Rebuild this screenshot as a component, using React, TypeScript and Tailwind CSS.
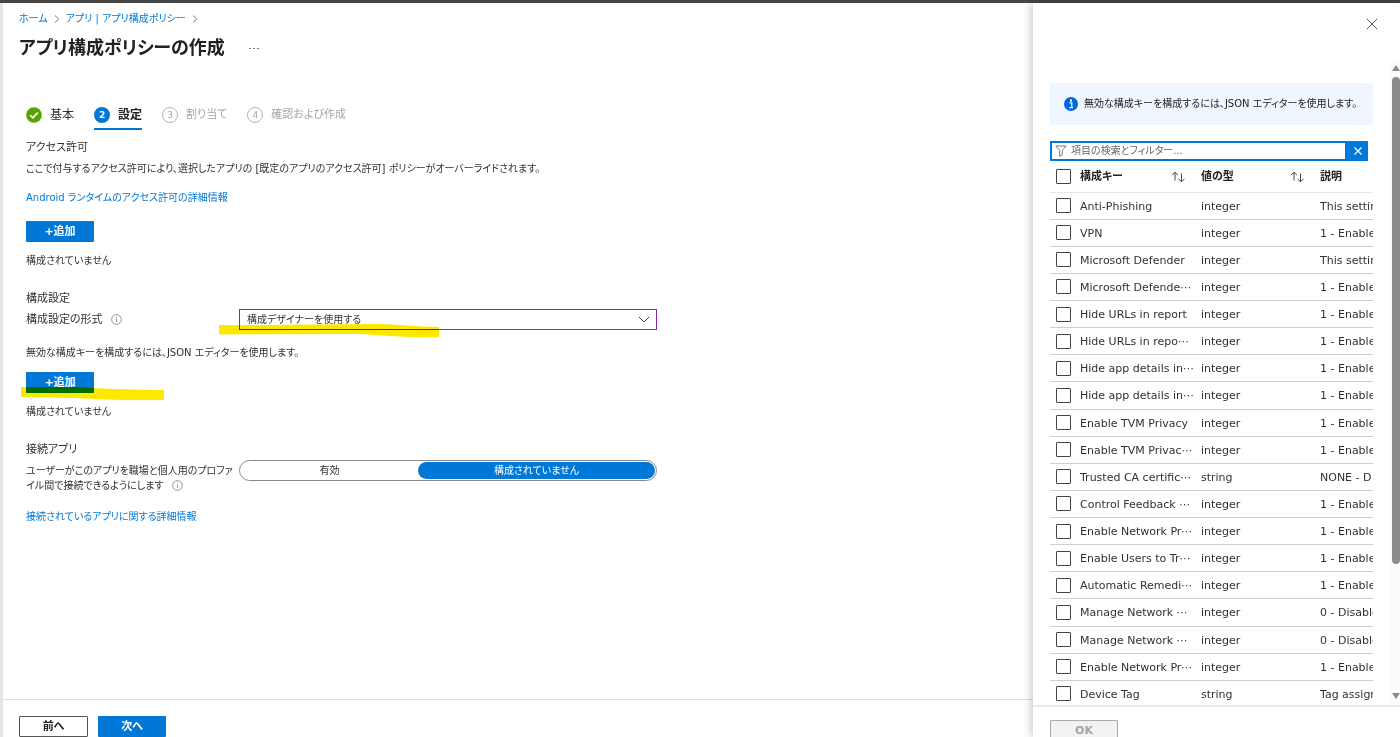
import React from "react";

type Row = { key: string; type: string; description: string };

const rows: Row[] = [
  { key: "Anti-Phishing", type: "integer", description: "This setting" },
  { key: "VPN", type: "integer", description: "1 - Enable" },
  { key: "Microsoft Defender", type: "integer", description: "This setting" },
  { key: "Microsoft Defende⋯", type: "integer", description: "1 - Enable" },
  { key: "Hide URLs in report", type: "integer", description: "1 - Enable" },
  { key: "Hide URLs in repo⋯", type: "integer", description: "1 - Enable" },
  { key: "Hide app details in⋯", type: "integer", description: "1 - Enable" },
  { key: "Hide app details in⋯", type: "integer", description: "1 - Enable" },
  { key: "Enable TVM Privacy", type: "integer", description: "1 - Enable" },
  { key: "Enable TVM Privac⋯", type: "integer", description: "1 - Enable" },
  { key: "Trusted CA certific⋯", type: "string", description: "NONE - D" },
  { key: "Control Feedback ⋯", type: "integer", description: "1 - Enable" },
  { key: "Enable Network Pr⋯", type: "integer", description: "1 - Enable" },
  { key: "Enable Users to Tr⋯", type: "integer", description: "1 - Enable" },
  { key: "Automatic Remedi⋯", type: "integer", description: "1 - Enable" },
  { key: "Manage Network ⋯", type: "integer", description: "0 - Disable" },
  { key: "Manage Network ⋯", type: "integer", description: "0 - Disable" },
  { key: "Enable Network Pr⋯", type: "integer", description: "1 - Enable" },
  { key: "Device Tag", type: "string", description: "Tag assign" },
];

function Chevron() {
  return (
    <svg className="h-2 w-[6px]" viewBox="0 0 6 8" fill="none" stroke="#777" aria-hidden="true">
      <path d="M1 .5 4.7 4 1 7.5" />
    </svg>
  );
}

function InfoOutline() {
  return (
    <svg className="inline-block h-[11px] w-[11px]" viewBox="0 0 11 11" fill="none" stroke="#777" aria-hidden="true">
      <circle cx="5.5" cy="5.5" r="4.8" strokeWidth=".8" />
      <path d="M5.5 4.8v3M5.5 2.8v1" strokeWidth=".8" />
    </svg>
  );
}

function SortIcon() {
  return (
    <svg className="h-3 w-[15px]" viewBox="0 0 15 12" fill="none" stroke="#444" strokeWidth="1" aria-hidden="true">
      <path d="M4 9.5V1.2M1 4.2l3-3 3 3M10.5 2.5v8.3M7.5 7.8l3 3 3-3" />
    </svg>
  );
}

function AddButton() {
  return (
    <button type="button" className="block h-[21px] w-[68px] rounded-[1px] bg-[#0078d7] text-center text-[11px] font-bold leading-[21px] text-white">
      +追加
    </button>
  );
}

function CheckBox({ label }: { label: string }) {
  return (
    <input
      type="checkbox"
      aria-label={label}
      className="mx-[6px] block h-[15px] w-[15px] appearance-none rounded-[1px] border border-[#444] bg-white checked:bg-[#0078d7]"
    />
  );
}

function Steps() {
  return (
    <nav className="mt-[42px] flex pl-[7px] text-[12px] leading-5">
      <a href="#basics" className="mr-5 flex items-center gap-2 border-b-2 border-transparent pb-[3px] text-[#323130]">
        <svg className="h-4 w-4" viewBox="0 0 16 16" aria-hidden="true">
          <circle cx="8" cy="8" r="7.8" fill="#57a300" />
          <path d="m4.2 8.2 2.6 2.6 5-5.2" fill="none" stroke="#fff" strokeWidth="1.6" />
        </svg>
        基本
      </a>
      <a href="#settings" className="mr-5 flex items-center gap-2 border-b-2 border-[#0078d7] pb-[3px] font-bold text-[#222]">
        <span className="grid h-4 w-4 place-items-center rounded-full bg-[#0078d7] text-[9px] leading-none text-white">2</span>
        設定
      </a>
      <a href="#assignments" className="mr-5 flex items-center gap-2 border-b-2 border-transparent pb-[3px] text-[11px] text-[#a6a6a6]">
        <span className="grid h-4 w-4 place-items-center rounded-full border border-[#b5b5b5] text-[9px] leading-none">3</span>
        割り当て
      </a>
      <a href="#review" className="flex items-center gap-2 border-b-2 border-transparent pb-[3px] text-[11px] text-[#a6a6a6]">
        <span className="grid h-4 w-4 place-items-center rounded-full border border-[#b5b5b5] text-[9px] leading-none">4</span>
        確認および作成
      </a>
    </nav>
  );
}

function MainArea() {
  return (
    <main className="flex min-w-0 flex-1 flex-col border-l-3 border-[#e6e6e6] text-[10px]">
      <div className="flex-1 pl-4 pt-[6px]">
        <nav className="flex items-center gap-[6px] leading-5 text-[#0078d7]">
          <a href="#home">ホーム</a>
          <Chevron />
          <a href="#apps">アプリ | アプリ構成ポリシー</a>
          <Chevron />
        </nav>
        <div className="mt-1 flex items-center">
          <h1 className="text-[18px] font-bold leading-[30px] text-[#222]">アプリ構成ポリシーの作成</h1>
          <button type="button" aria-label="その他" className="ml-6 flex gap-[2px]">
            <span className="h-px w-[2px] bg-[#777]" />
            <span className="h-px w-[2px] bg-[#777]" />
            <span className="h-px w-[2px] bg-[#777]" />
          </button>
        </div>
        <Steps />
        <div className="mt-2 pl-[7px]">
          <h2 className="text-[11px]">アクセス許可</h2>
          <p className="mt-px">ここで付与するアクセス許可により、選択したアプリの [既定のアプリのアクセス許可] ポリシーがオーバーライドされます。</p>
          <p className="mt-[9px]">
            <a href="#android" className="text-[#0078d7]">Android ランタイムのアクセス許可の詳細情報</a>
          </p>
          <div className="mt-[13px]">
            <AddButton />
          </div>
          <p className="mt-[9px]">構成されていません</p>

          <h2 className="mt-[18px] text-[11px]">構成設定</h2>
          <div className="flex items-center">
            <label htmlFor="format" className="flex w-[213px] items-center gap-2 text-[11px]">
              構成設定の形式 <InfoOutline />
            </label>
            <div className="relative w-[418px]">
              <select
                id="format"
                className="block h-[21px] w-full appearance-none border border-[#8a2da5] bg-white px-[7px] text-[10px] leading-[19px] text-[#323130]"
              >
                <option>構成デザイナーを使用する</option>
              </select>
              <svg className="pointer-events-none absolute right-[7px] top-[7px] h-[7px] w-3" viewBox="0 0 12 7" fill="none" stroke="#444" aria-hidden="true">
                <path d="m.8.8 5.2 5.2L11.2.8" />
              </svg>
              <svg className="pointer-events-none absolute -left-5 top-[15px] h-[14px] w-[220px] mix-blend-multiply" viewBox="0 0 220 14" aria-hidden="true">
                <path d="M0 1h30L160 0c20 0 35 3 60 3v10h-25c-25 0-35-3-65-3L0 10.500Z" fill="#ffe800" />
              </svg>
            </div>
          </div>
          <p className="mt-[13px]">無効な構成キーを構成するには、JSON エディターを使用します。</p>
          <div className="relative mt-[9px]">
            <AddButton />
            <svg className="pointer-events-none absolute -left-[5px] top-[15px] h-[13px] w-[143px] mix-blend-multiply" viewBox="0 0 143 13" aria-hidden="true">
              <path d="M0 0h50c30 1 55 3 93 3v10H100C65 12 40 10 0 10Z" fill="#ffe800" />
            </svg>
          </div>
          <p className="mt-[9px]">構成されていません</p>

          <h2 id="connected-heading" className="mt-[18px] text-[11px]">接続アプリ</h2>
          <div className="flex">
            <p className="mt-[3px] w-[213px] whitespace-nowrap leading-[15px]">
              ユーザーがこのアプリを職場と個人用のプロファ
              <br />
              <span className="flex items-center gap-2">
                イル間で接続できるようにします <InfoOutline />
              </span>
            </p>
            <div role="radiogroup" aria-labelledby="connected-heading" className="flex h-[21px] w-[418px] rounded-full border border-[#888] p-px text-center leading-[15px]">
              <label className="w-[177px] rounded-full py-px has-checked:bg-[#0078d7] has-checked:text-white">
                <input type="radio" name="connected" className="sr-only" />
                有効
              </label>
              <label className="flex-1 rounded-full py-px has-checked:bg-[#0078d7] has-checked:text-white">
                <input type="radio" name="connected" defaultChecked className="sr-only" />
                構成されていません
              </label>
            </div>
          </div>
          <p className="mt-[14px]">
            <a href="#connected" className="text-[#0078d7]">接続されているアプリに関する詳細情報</a>
          </p>
        </div>
      </div>
      <footer className="flex h-[38px] gap-[10px] border-t border-[#e1e1e1] pl-4 pt-4 text-[11px] font-bold">
        <button type="button" className="h-[21px] w-[69px] rounded-[1px] border border-[#555] leading-[19px] text-[#222]">前へ</button>
        <button type="button" className="h-[21px] w-[68px] rounded-[1px] bg-[#0078d7] leading-[21px] text-white">次へ</button>
      </footer>
    </main>
  );
}

function KeysPanel() {
  return (
    <aside className="z-10 flex w-[367px] shrink-0 flex-col bg-white shadow-[0_0_10px_rgba(0,0,0,0.3)]">
      <div className="flex h-[57px] justify-end pr-[22px] pt-[15px]">
        <button type="button" aria-label="閉じる" className="h-3">
          <svg className="h-3 w-3" viewBox="0 0 12 12" fill="none" stroke="#555" aria-hidden="true">
            <path d="m.8.8 10.400 10.400M11.200.8.8 11.200" />
          </svg>
        </button>
      </div>
      <div className="flex min-h-0 flex-1">
        <div className="min-w-0 flex-1 overflow-hidden pl-[17px] pr-[17px] pt-[23px]">
          <div className="flex h-[42px] items-center gap-[6px] whitespace-nowrap rounded-[2px] bg-[#eff6ff] pl-[14px] text-[10px] text-[#222]">
            <svg className="h-[14px] w-[14px]" viewBox="0 0 14 14" aria-hidden="true">
              <circle cx="7" cy="7" r="7" fill="#0067dc" />
              <path d="M5.500 5.900h2.300v4.600M5.200 10.700h3.800" fill="none" stroke="#fff" strokeWidth="1.200" />
              <rect x="6" y="2.500" width="2" height="2" fill="#fff" />
            </svg>
            無効な構成キーを構成するには、JSON エディターを使用します。
          </div>
          <div className="mr-[5px] mt-4 flex h-5">
            <div className="flex min-w-0 flex-1 items-center border-2 border-[#0078d7] pl-[3px]">
              <svg className="h-3 w-3 shrink-0" viewBox="0 0 12 12" fill="none" stroke="#777" aria-hidden="true">
                <path d="M.8 1h10.400L7.300 5.500V10L4.700 11.300V5.500Z" />
              </svg>
              <input
                type="text"
                aria-label="項目の検索とフィルター"
                placeholder="項目の検索とフィルター..."
                className="ml-1 h-4 min-w-0 flex-1 text-[10px] outline-none placeholder:text-[#666]"
              />
            </div>
            <button type="button" aria-label="クリア" className="grid w-[21px] place-items-center bg-[#0078d7]">
              <svg className="h-2 w-2" viewBox="0 0 8 8" fill="none" stroke="#fff" strokeWidth="1.200" aria-hidden="true">
                <path d="m.5.500 7 7M7.500.500l-7 7" />
              </svg>
            </button>
          </div>
          <div className="overflow-hidden">
            <table className="h-[547px] w-[420px] table-fixed border-collapse text-left">
              <colgroup>
                <col className="w-[30px]" />
                <col className="w-[121px]" />
                <col className="w-[119px]" />
                <col />
              </colgroup>
              <thead>
                <tr className="h-[31px] border-b border-[#e5e5e5] text-[#222]">
                  <th className="p-0"><CheckBox label="すべて選択" /></th>
                  <th className="p-0 pt-[2px] font-bold">
                    <div className="flex items-center justify-between pr-[15px]">構成キー <SortIcon /></div>
                  </th>
                  <th className="p-0 pt-[2px] font-bold">
                    <div className="flex items-center justify-between pr-[15px]">値の型 <SortIcon /></div>
                  </th>
                  <th className="p-0 pt-[2px] font-bold">説明</th>
                </tr>
              </thead>
              <tbody>
                {rows.map((row, index) => (
                  <tr key={index} className="border-b border-[#cfcfcf]">
                    <td className="p-0"><CheckBox label={row.key} /></td>
                    <td className="whitespace-nowrap p-0 pt-[2px]">{row.key}</td>
                    <td className="p-0 pt-[2px]">{row.type}</td>
                    <td className="whitespace-nowrap p-0 pt-[2px]">{row.description}</td>
                  </tr>
                ))}
              </tbody>
            </table>
          </div>
        </div>
        <div className="flex w-[10px] flex-col items-end bg-[#fcfcfc] pb-[6px] pt-[5px]" aria-hidden="true">
          <svg className="h-[6px] w-2" viewBox="0 0 8 6"><path d="M4 0 8 6H0Z" fill="#8b8b8b" /></svg>
          <div className="mt-[6px] flex-1 self-stretch pl-[2px]">
            <div className="h-[79%] rounded-full bg-[#8b8b8b]" />
          </div>
          <svg className="h-[6px] w-2" viewBox="0 0 8 6"><path d="M4 6 8 0H0Z" fill="#8b8b8b" /></svg>
        </div>
      </div>
      <footer className="h-[32px] overflow-hidden border-t-2 border-[#eaeaea] pl-[17px] pt-[13px]">
        <button type="button" disabled className="h-[21px] w-[68px] rounded-[1px] border border-[#aaa] bg-[#f3f2f1] font-bold leading-[19px] text-[#a6a6a6]">OK</button>
      </footer>
    </aside>
  );
}

export default function App() {
  return (
    <div className="flex h-screen flex-col overflow-hidden bg-white font-['DejaVu_Sans','Noto_Sans_CJK_JP',sans-serif] text-[11px] leading-5 text-[#323130] [font-feature-settings:'palt']">
      <div className="h-[3px] shrink-0 bg-[#484644]" />
      <div className="flex min-h-0 flex-1">
        <MainArea />
        <KeysPanel />
      </div>
    </div>
  );
}
